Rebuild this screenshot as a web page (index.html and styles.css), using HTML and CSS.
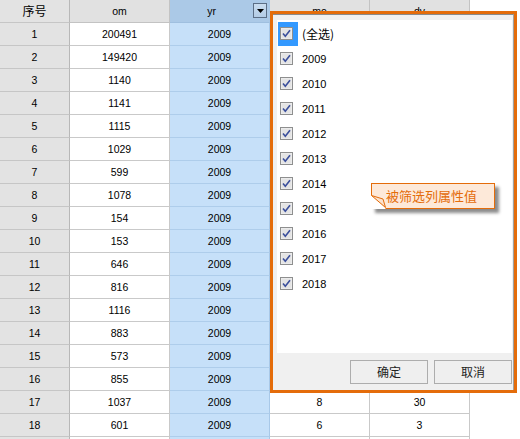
FILE: index.html
```html
<!DOCTYPE html>
<html>
<head>
<meta charset="utf-8">
<link rel="stylesheet" href="styles.css">
</head>
<body>
<div class="grid">
  <div class="c idx hd cn">序号</div><div class="c hd">om</div><div class="c yr yrhd"><span class="yrlabel">yr</span><span class="dd"><svg width="7" height="4" viewBox="0 0 7 4"><path d="M0 0H7L3.5 4Z" fill="#000"/></svg></span></div><div class="c hd">mo</div><div class="c hd">dv</div>

  <div class="c idx">1</div><div class="c">200491</div><div class="c yr">2009</div><div class="c"></div><div class="c"></div>
  <div class="c idx">2</div><div class="c">149420</div><div class="c yr">2009</div><div class="c"></div><div class="c"></div>
  <div class="c idx">3</div><div class="c">1140</div><div class="c yr">2009</div><div class="c"></div><div class="c"></div>
  <div class="c idx">4</div><div class="c">1141</div><div class="c yr">2009</div><div class="c"></div><div class="c"></div>
  <div class="c idx">5</div><div class="c">1115</div><div class="c yr">2009</div><div class="c"></div><div class="c"></div>
  <div class="c idx">6</div><div class="c">1029</div><div class="c yr">2009</div><div class="c"></div><div class="c"></div>
  <div class="c idx">7</div><div class="c">599</div><div class="c yr">2009</div><div class="c"></div><div class="c"></div>
  <div class="c idx">8</div><div class="c">1078</div><div class="c yr">2009</div><div class="c"></div><div class="c"></div>
  <div class="c idx">9</div><div class="c">154</div><div class="c yr">2009</div><div class="c"></div><div class="c"></div>
  <div class="c idx">10</div><div class="c">153</div><div class="c yr">2009</div><div class="c"></div><div class="c"></div>
  <div class="c idx">11</div><div class="c">646</div><div class="c yr">2009</div><div class="c"></div><div class="c"></div>
  <div class="c idx">12</div><div class="c">816</div><div class="c yr">2009</div><div class="c"></div><div class="c"></div>
  <div class="c idx">13</div><div class="c">1116</div><div class="c yr">2009</div><div class="c"></div><div class="c"></div>
  <div class="c idx">14</div><div class="c">883</div><div class="c yr">2009</div><div class="c"></div><div class="c"></div>
  <div class="c idx">15</div><div class="c">573</div><div class="c yr">2009</div><div class="c"></div><div class="c"></div>
  <div class="c idx">16</div><div class="c">855</div><div class="c yr">2009</div><div class="c"></div><div class="c"></div>
  <div class="c idx">17</div><div class="c">1037</div><div class="c yr">2009</div><div class="c">8</div><div class="c">30</div>
  <div class="c idx">18</div><div class="c">601</div><div class="c yr">2009</div><div class="c">6</div><div class="c">3</div>
  <div class="c idx"></div><div class="c"></div><div class="c yr"></div><div class="c"></div><div class="c"></div>
</div>

<div class="frame">
  <div class="popup">
    <div class="list">
      <div class="item"><span class="cbw sel"><svg class="cb" width="13" height="13" viewBox="0 0 13 13"><rect x="0.5" y="0.5" width="12" height="12" fill="#f2f2f2" stroke="#8e8f8f"/><rect x="1.5" y="1.5" width="10" height="10" fill="#e4e4e4"/><path d="M3 6.5L5.3 9.3L10 3.2" fill="none" stroke="#3b4f9c" stroke-width="1.6"/></svg></span><span class="lbl cn">(全选)</span></div>
      <div class="item"><span class="cbw"><svg class="cb" width="13" height="13" viewBox="0 0 13 13"><rect x="0.5" y="0.5" width="12" height="12" fill="#f2f2f2" stroke="#8e8f8f"/><rect x="1.5" y="1.5" width="10" height="10" fill="#e4e4e4"/><path d="M3 6.5L5.3 9.3L10 3.2" fill="none" stroke="#3b4f9c" stroke-width="1.6"/></svg></span><span class="lbl">2009</span></div>
      <div class="item"><span class="cbw"><svg class="cb" width="13" height="13" viewBox="0 0 13 13"><rect x="0.5" y="0.5" width="12" height="12" fill="#f2f2f2" stroke="#8e8f8f"/><rect x="1.5" y="1.5" width="10" height="10" fill="#e4e4e4"/><path d="M3 6.5L5.3 9.3L10 3.2" fill="none" stroke="#3b4f9c" stroke-width="1.6"/></svg></span><span class="lbl">2010</span></div>
      <div class="item"><span class="cbw"><svg class="cb" width="13" height="13" viewBox="0 0 13 13"><rect x="0.5" y="0.5" width="12" height="12" fill="#f2f2f2" stroke="#8e8f8f"/><rect x="1.5" y="1.5" width="10" height="10" fill="#e4e4e4"/><path d="M3 6.5L5.3 9.3L10 3.2" fill="none" stroke="#3b4f9c" stroke-width="1.6"/></svg></span><span class="lbl">2011</span></div>
      <div class="item"><span class="cbw"><svg class="cb" width="13" height="13" viewBox="0 0 13 13"><rect x="0.5" y="0.5" width="12" height="12" fill="#f2f2f2" stroke="#8e8f8f"/><rect x="1.5" y="1.5" width="10" height="10" fill="#e4e4e4"/><path d="M3 6.5L5.3 9.3L10 3.2" fill="none" stroke="#3b4f9c" stroke-width="1.6"/></svg></span><span class="lbl">2012</span></div>
      <div class="item"><span class="cbw"><svg class="cb" width="13" height="13" viewBox="0 0 13 13"><rect x="0.5" y="0.5" width="12" height="12" fill="#f2f2f2" stroke="#8e8f8f"/><rect x="1.5" y="1.5" width="10" height="10" fill="#e4e4e4"/><path d="M3 6.5L5.3 9.3L10 3.2" fill="none" stroke="#3b4f9c" stroke-width="1.6"/></svg></span><span class="lbl">2013</span></div>
      <div class="item"><span class="cbw"><svg class="cb" width="13" height="13" viewBox="0 0 13 13"><rect x="0.5" y="0.5" width="12" height="12" fill="#f2f2f2" stroke="#8e8f8f"/><rect x="1.5" y="1.5" width="10" height="10" fill="#e4e4e4"/><path d="M3 6.5L5.3 9.3L10 3.2" fill="none" stroke="#3b4f9c" stroke-width="1.6"/></svg></span><span class="lbl">2014</span></div>
      <div class="item"><span class="cbw"><svg class="cb" width="13" height="13" viewBox="0 0 13 13"><rect x="0.5" y="0.5" width="12" height="12" fill="#f2f2f2" stroke="#8e8f8f"/><rect x="1.5" y="1.5" width="10" height="10" fill="#e4e4e4"/><path d="M3 6.5L5.3 9.3L10 3.2" fill="none" stroke="#3b4f9c" stroke-width="1.6"/></svg></span><span class="lbl">2015</span></div>
      <div class="item"><span class="cbw"><svg class="cb" width="13" height="13" viewBox="0 0 13 13"><rect x="0.5" y="0.5" width="12" height="12" fill="#f2f2f2" stroke="#8e8f8f"/><rect x="1.5" y="1.5" width="10" height="10" fill="#e4e4e4"/><path d="M3 6.5L5.3 9.3L10 3.2" fill="none" stroke="#3b4f9c" stroke-width="1.6"/></svg></span><span class="lbl">2016</span></div>
      <div class="item"><span class="cbw"><svg class="cb" width="13" height="13" viewBox="0 0 13 13"><rect x="0.5" y="0.5" width="12" height="12" fill="#f2f2f2" stroke="#8e8f8f"/><rect x="1.5" y="1.5" width="10" height="10" fill="#e4e4e4"/><path d="M3 6.5L5.3 9.3L10 3.2" fill="none" stroke="#3b4f9c" stroke-width="1.6"/></svg></span><span class="lbl">2017</span></div>
      <div class="item"><span class="cbw"><svg class="cb" width="13" height="13" viewBox="0 0 13 13"><rect x="0.5" y="0.5" width="12" height="12" fill="#f2f2f2" stroke="#8e8f8f"/><rect x="1.5" y="1.5" width="10" height="10" fill="#e4e4e4"/><path d="M3 6.5L5.3 9.3L10 3.2" fill="none" stroke="#3b4f9c" stroke-width="1.6"/></svg></span><span class="lbl">2018</span></div>
    </div>
    <div class="footer">
      <div class="btn cn">确定</div>
      <div class="btn cn">取消</div>
    </div>
  </div>
</div>

<div class="note cn">被筛选列属性值<svg class="fold" width="16" height="14" viewBox="0 0 16 14"><path d="M0 0V14H15Z" fill="#ffffff"/><path d="M0.5 0.5L14.5 12.5L12 4Z" fill="#fbe3cf" stroke="#e46c0a" stroke-width="1"/></svg></div>
</body>
</html>
```
FILE: styles.css
```css
html, body {
  margin: 0;
  padding: 0;
  background: #ffffff;
}
body {
  width: 520px;
  height: 439px;
  overflow: hidden;
  font-family: "Liberation Sans", Arial, sans-serif;
  font-size: 10.5px;
  color: #000;
}
.cn {
  font-family: "Noto Sans CJK SC", "Liberation Sans", sans-serif;
  font-size: 12px;
}
.grid {
  display: grid;
  grid-template-columns: 70px 100px 100px 100px 100px;
  grid-auto-rows: 23px;
  width: 470px;
}
.c {
  box-sizing: border-box;
  border-right: 1px solid #c9c9c9;
  border-bottom: 1px solid #c9c9c9;
  background: #ffffff;
  text-align: center;
  line-height: 22px;
  white-space: nowrap;
  overflow: hidden;
}
.hd {
  background: #e1e1e1;
  border-color: #c3c3c3;
}
.idx {
  background: #e3e3e3;
  border-right-color: #b8b8b8;
  border-bottom-color: #c6c6c6;
}
.yr {
  background: #c6e0f9;
  border-right-color: #a8c8e8;
  border-bottom-color: #aecdeb;
}
.yrhd {
  background: #abc9e7;
  border-bottom-color: #9fbfdf;
  display: flex;
  align-items: center;
  padding-right: 2px;
}
.yrlabel {
  flex: 1;
  text-align: center;
}
.dd {
  box-sizing: border-box;
  width: 14px;
  height: 15px;
  border: 1px solid #5b6e86;
  background: linear-gradient(#c9dcef, #b3cce6);
  display: flex;
  align-items: center;
  justify-content: center;
  margin-bottom: 1px;
}
.dd svg { display: block; }

.frame {
  position: absolute;
  left: 270px;
  top: 11px;
  width: 247px;
  height: 382px;
  box-sizing: border-box;
  border: 3px solid #e46c0a;
}
.popup {
  box-sizing: border-box;
  height: 100%;
  background: #f0f0f0;
  border-top: 1px solid #8a8a8a;
  border-right: 1px solid #a0a0a0;
  padding: 5px 1px 0 4px;
  display: flex;
  flex-direction: column;
}
.list {
  background: #ffffff;
  height: 333px;
  box-sizing: border-box;
  padding-top: 1px;
  display: flex;
  flex-direction: column;
}
.item {
  height: 25px;
  display: flex;
  align-items: center;
}
.cbw {
  box-sizing: border-box;
  width: 20px;
  height: 24px;
  margin-left: 1px;
  padding-left: 2px;
  display: flex;
  align-items: center;
}
.cbw.sel {
  background: #3399ff;
}
.cb { display: block; }
.lbl {
  margin-left: 4px;
  font-size: 11px;
}
.lbl.cn {
  font-size: 12px;
}
.footer {
  display: flex;
  justify-content: flex-end;
  gap: 6px;
  padding-top: 7px;
}
.btn {
  box-sizing: border-box;
  width: 78px;
  height: 24px;
  border: 1px solid #adadad;
  background: #efefef;
  text-align: center;
  line-height: 21px;
  color: #222;
}

.note {
  position: absolute;
  left: 371px;
  top: 183px;
  width: 124px;
  height: 26px;
  box-sizing: border-box;
  border: 1px solid #e46c0a;
  background: #fde9d9;
  color: #e46c0a;
  font-size: 13px;
  line-height: 23px;
  padding-left: 14px;
  box-shadow: 4px 4px 3px rgba(0, 0, 0, 0.45);
}
.fold {
  position: absolute;
  left: -1px;
  bottom: -1px;
  display: block;
}
```
